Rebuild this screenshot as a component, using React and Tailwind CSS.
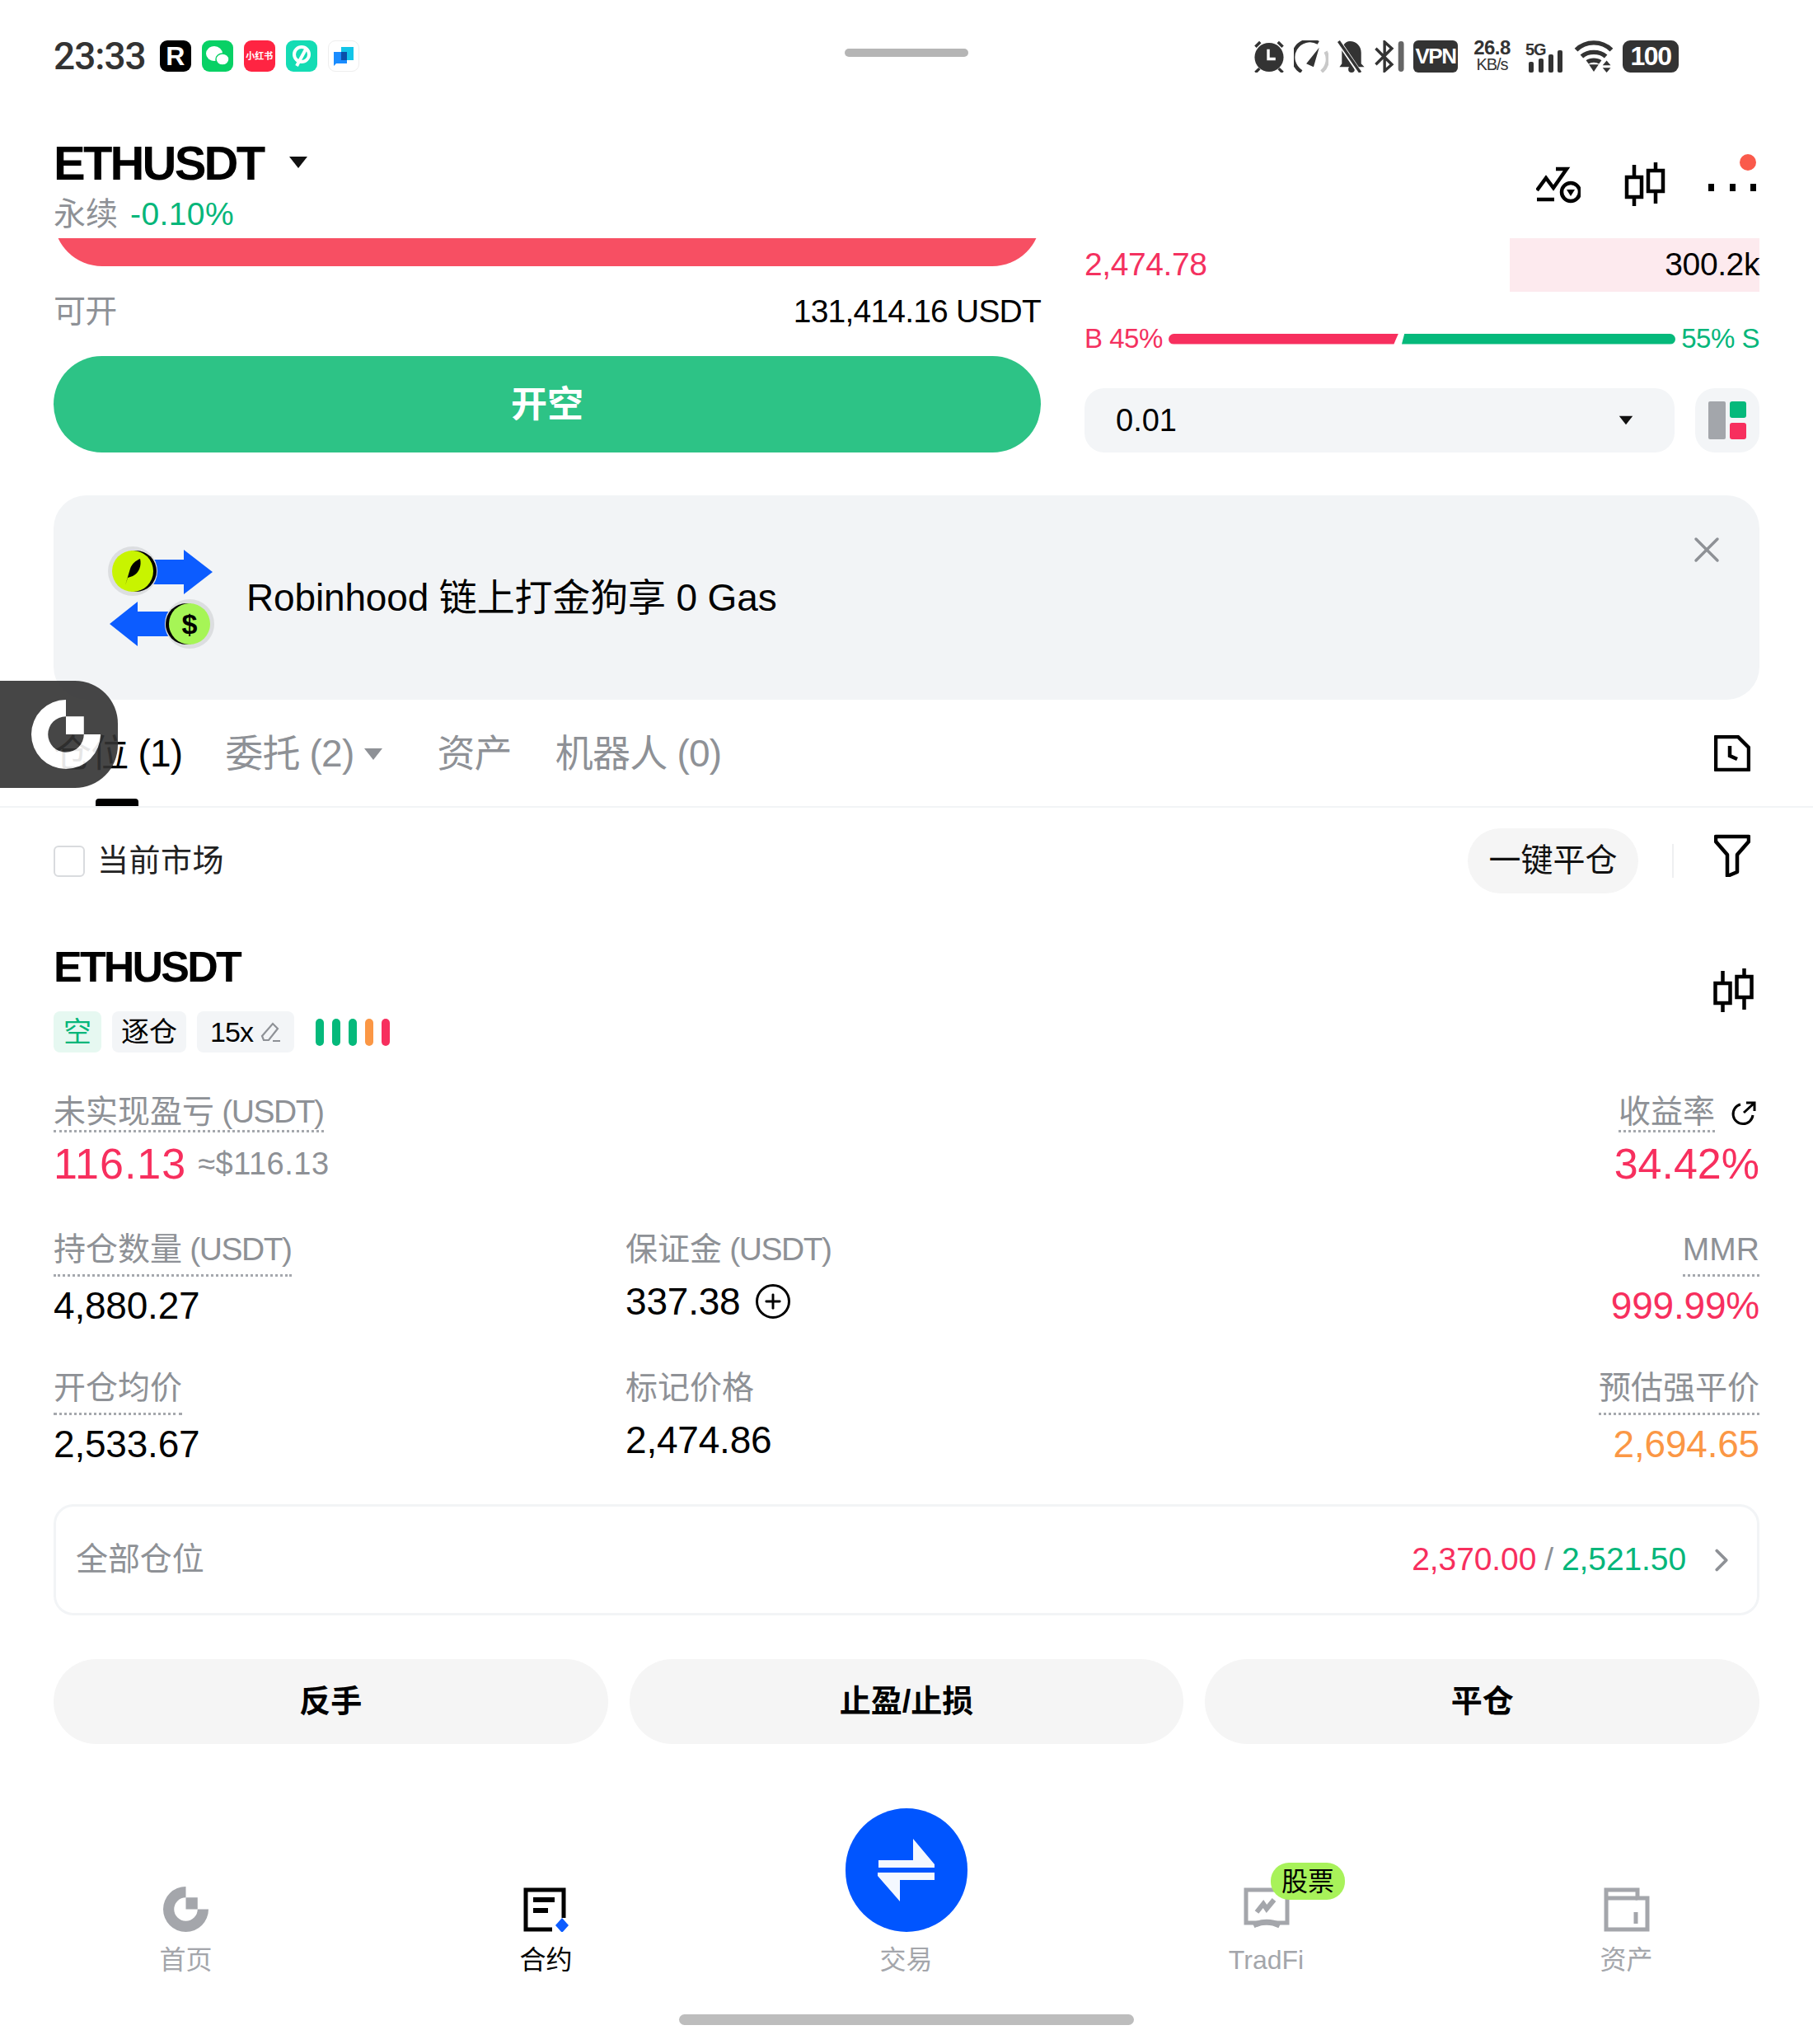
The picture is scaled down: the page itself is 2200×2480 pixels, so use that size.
import React from 'react';
import { X, ChevronRight, Plus } from 'lucide-react';

const FONT = { fontFamily: '"Liberation Sans", "Noto Sans CJK SC", sans-serif' };

function Caret({ className }) {
  return (
    <svg viewBox="0 0 24 16" className={className}>
      <path d="M1 1h22L12 15z" fill="currentColor" />
    </svg>
  );
}

function Candles({ className }) {
  return (
    <svg viewBox="0 0 50 54" className={className} fill="none" stroke="#000" strokeWidth="4.5">
      <path d="M12 3v15M12 41v12M38 0v10M38 36v14" />
      <rect x="3" y="18" width="18" height="24" />
      <rect x="29" y="10" width="18" height="25" />
    </svg>
  );
}

function GateLogo({ className, color }) {
  return (
    <svg viewBox="0 0 54 54" className={className} fill={color}>
      <path d="M27 0A27 27 0 1 0 54 27H41A14 14 0 1 1 27 13Z" />
      <rect x="27" y="13" width="14" height="14" />
    </svg>
  );
}

function AppIcons() {
  return (
    <div className="flex gap-[13px] ml-[17px]">
      <div className="w-[38px] h-[38px] rounded-[9px] bg-black flex items-center justify-center text-white text-[32px] font-bold">R</div>
      <div className="w-[38px] h-[38px] rounded-[9px] bg-[#08d165] flex items-center justify-center">
        <svg viewBox="0 0 30 28" className="w-[30px] h-[28px]" fill="#fff">
          <ellipse cx="11" cy="11" rx="10" ry="9" />
          <ellipse cx="21" cy="18" rx="8" ry="7" stroke="#08d165" strokeWidth="1.5" />
        </svg>
      </div>
      <div className="w-[38px] h-[38px] rounded-[9px] bg-[#ff2442] flex items-center justify-center text-white text-[11px] font-bold whitespace-nowrap">小红书</div>
      <div className="w-[38px] h-[38px] rounded-[9px] bg-[#14dcb4] flex items-center justify-center">
        <svg viewBox="0 0 28 28" className="w-[28px] h-[28px]" fill="none" stroke="#fff" strokeWidth="4">
          <circle cx="14" cy="12" r="9" />
          <path d="M8 26 20 4" />
        </svg>
      </div>
      <div className="w-[38px] h-[38px] rounded-[9px] bg-white border border-[#eeeeee] flex items-center justify-center">
        <svg viewBox="0 0 28 28" className="w-[28px] h-[28px]">
          <rect x="11" y="3" width="15" height="16" fill="#12c5e8" />
          <path d="M2 9h16v14H5l-3 3z" fill="#1a8cff" />
          <rect x="11" y="9" width="7" height="10" fill="#0a4fa8" />
        </svg>
      </div>
    </div>
  );
}

function StatusIcons() {
  return (
    <div className="flex items-center h-[39px] text-[#333333]">
      <svg viewBox="0 0 40 40" className="w-[40px] h-[39px]" fill="#333">
        <circle cx="20" cy="21" r="18" />
        <path d="M3 8l6-6M37 8l-6-6M8 35l-5 5M32 35l5 5" stroke="#333" strokeWidth="3.5" />
        <path d="M19 11v12h9" stroke="#fff" strokeWidth="3.5" fill="none" />
      </svg>
      <svg viewBox="0 0 42 40" className="w-[42px] h-[39px] ml-[10px]" fill="none" strokeWidth="4.5">
        <path d="M9 39A20 20 0 0 1 30 3" stroke="#333" />
        <path d="M34 39A20 20 0 0 0 39 14" stroke="#c9c9c9" />
        <path d="M15 29 31 9l-7 24z" fill="#333" stroke="none" />
      </svg>
      <svg viewBox="0 0 34 40" className="w-[34px] h-[39px] ml-[11px]" fill="#333">
        <path d="M15 1c8 0 14 6 14 14v14l4 4H2l3-4V13C5 7 9 1 15 1z" />
        <circle cx="17" cy="36" r="4" />
        <path d="M0 0l27 40" stroke="#fff" strokeWidth="6" />
        <path d="M1 1l27 39" stroke="#333" strokeWidth="3.5" />
      </svg>
      <svg viewBox="0 0 39 40" className="w-[39px] h-[39px] ml-[9px]" fill="none" stroke="#333" strokeWidth="3.5">
        <path d="M3 10l20 20-9 8V2l9 8L3 30" />
        <rect x="31" y="1" width="7" height="38" rx="3.5" fill="#666" stroke="none" />
      </svg>
      <div className="ml-[10px] w-[54px] h-[39px] rounded-[6px] bg-[#333333] flex items-center justify-center text-white text-[26px] font-semibold tracking-[-1.5px]">VPN</div>
      <div className="ml-[17px] w-[49px] flex flex-col items-center text-[24px] leading-[20px] font-bold tracking-[-0.5px] whitespace-nowrap">
        <span>26.8</span>
        <span className="text-[20px] tracking-[-1px] font-normal">KB/s</span>
      </div>
      <div className="ml-[16px] w-[47px] h-[39px] relative">
        <span className="absolute left-0 top-[-4px] text-[20px] font-bold tracking-[-1px]">5G</span>
        <svg viewBox="0 0 47 39" className="w-[47px] h-[39px]" fill="#333">
          <rect x="4" y="26" width="6" height="13" rx="2" />
          <rect x="16" y="22" width="6" height="17" rx="2" />
          <rect x="28" y="17" width="6" height="22" rx="2" />
          <rect x="39" y="12" width="6" height="27" rx="2" />
        </svg>
      </div>
      <svg viewBox="0 0 48 40" className="w-[48px] h-[39px] ml-[12px]" fill="none" stroke="#333" strokeWidth="5.5">
        <path d="M2 12C14 0 34 0 46 12M9 20c8-7 22-7 30 0M16 27c4-3 12-3 16 0" />
        <path d="M18 30h12l-6 9z" fill="#333" stroke="none" />
        <path d="M40 25l5 6H35zM40 40l5-6H35z" fill="#333" stroke="none" />
      </svg>
      <div className="ml-[11px] w-[68px] h-[39px] rounded-[9px] bg-[#333333] flex items-center justify-center text-white text-[32px] font-semibold tracking-[-1.5px]">100</div>
    </div>
  );
}

function Dotted({ children, pb = 'pb-[8px]' }) {
  return (
    <span className={`inline-block text-[39px] leading-[44px] ${pb} border-b-[3px] border-dotted border-[#a5a8ad] text-[#8e9196] whitespace-nowrap`}>
      {children}
    </span>
  );
}

function Usdt() {
  return <span className="tracking-[-1.5px]"> (USDT)</span>;
}

function Stat({ label, value, valueClass = '', right, dotted = true }) {
  return (
    <div className={right ? 'flex flex-col items-end' : 'flex flex-col items-start'}>
      {dotted ? <Dotted>{label}</Dotted> : <span className="text-[39px] leading-[44px] text-[#8e9196] whitespace-nowrap">{label}</span>}
      <div className={`${dotted ? 'mt-[8px]' : 'mt-[14px]'} flex items-center text-[46px] leading-[54px] tracking-[-0.2px] ${valueClass}`}>{value}</div>
    </div>
  );
}

function NavItem({ label, active, children }) {
  return (
    <div className="w-[437px] flex flex-col items-center">
      <div className="h-[150px] w-full flex items-end justify-center relative">{children}</div>
      <span className={`mt-[16px] text-[32px] leading-[36px] ${active ? 'text-black' : 'text-[#a4a6ab]'}`}>{label}</span>
    </div>
  );
}

export default function App() {
  return (
    <div style={FONT} className="relative w-[2200px] h-[2480px] overflow-hidden bg-white text-black">
      {/* status bar */}
      <div className="h-[136px] pl-[65px] pr-[163px] flex items-center justify-between relative">
        <div className="flex items-center">
          <span className="text-[46px] text-[#333333] tracking-[-1px] font-medium" style={{ fontFamily: 'Roboto, sans-serif' }}>23:33</span>
          <AppIcons />
        </div>
        <div className="absolute left-[1025px] top-[59px] w-[150px] h-[10px] rounded-full bg-[#b5b5b5]" />
        <StatusIcons />
      </div>

      {/* header */}
      <div className="h-[153px] pl-[65px] pr-[69px] flex justify-between relative">
        <div>
          <div className="flex items-center h-[46px] mt-[38px]">
            <span className="text-[58px] font-bold tracking-[-2.8px]">ETHUSDT</span>
            <Caret className="w-[24px] h-[16px] ml-[31px] text-[#111]" />
          </div>
          <div className="flex items-center h-[44px] mt-[18px] text-[39px] whitespace-nowrap">
            <span className="text-[#8e9196]">永续</span>
            <span className="ml-[15px] text-[#05b67a] tracking-[0.4px]">-0.10%</span>
          </div>
        </div>
        <div className="flex items-start pt-[65px]">
          <svg viewBox="0 0 54 46" className="w-[54px] h-[46px]" fill="none" stroke="#000" strokeWidth="4.5">
            <path d="M1 30 12 15l9 12L37 4H24M1 41h21" />
            <circle cx="42" cy="32" r="11" />
            <path d="M37 29h10l-5 8z" fill="#000" stroke="none" />
          </svg>
          <Candles className="w-[50px] h-[54px] ml-[53px] -mt-[4px]" />
          <div className="ml-[52px] mt-[22px] w-[58px] flex justify-between">
            <div className="w-[7px] h-[9px] bg-black" />
            <div className="w-[7px] h-[9px] bg-black" />
            <div className="w-[7px] h-[9px] bg-black" />
          </div>
        </div>
        <div className="absolute left-[2111px] top-[51px] w-[20px] h-[20px] rounded-full bg-[#fa5a4b]" />
      </div>

      {/* order area */}
      <div className="h-[260px] px-[65px] flex justify-between">
        <div className="w-[1198px]">
          <div className="h-[34px] overflow-hidden">
            <div className="h-[118px] -mt-[84px] rounded-full bg-[#f74f63]" />
          </div>
          <div className="h-[109px] pt-[2px] flex items-center justify-between text-[39px] tracking-[-0.8px]">
            <span className="text-[#8e9196]">可开</span>
            <span>131,414.16 USDT</span>
          </div>
          <div className="h-[117px] rounded-full bg-[#2dc386] flex items-center justify-center text-white text-[44px] font-bold">开空</div>
        </div>
        <div className="w-[819px]">
          <div className="h-[65px] flex items-center justify-between text-[39px] tracking-[-0.4px]">
            <span className="text-[#f4315f]">2,474.78</span>
            <div className="w-[303px] h-[65px] bg-[#fdeaee] flex items-center justify-end">300.2k</div>
          </div>
          <div className="h-[32px] mt-[41px] flex items-center justify-between text-[33px] tracking-[-0.5px] whitespace-nowrap">
            <span className="text-[#f4315f]">B 45%</span>
            <div className="w-[615px] h-[13px] flex gap-[4px]">
              <div className="w-[279px] rounded-l-full bg-[#f72f5e] [clip-path:polygon(0_0,100%_0,98%_100%,0_100%)]" />
              <div className="flex-1 rounded-r-full bg-[#05b97b] [clip-path:polygon(1%_0,100%_0,100%_100%,0_100%)]" />
            </div>
            <span className="text-[#05b67a]">55% S</span>
          </div>
          <div className="mt-[44px] flex justify-between">
            <div className="w-[716px] h-[78px] rounded-[24px] bg-[#f3f5f7] pl-[38px] pr-[50px] flex items-center justify-between text-[38px]">
              <span>0.01</span>
              <Caret className="w-[18px] h-[12px] text-[#111]" />
            </div>
            <div className="w-[78px] h-[78px] rounded-[24px] bg-[#f3f5f7] flex items-center justify-center">
              <svg viewBox="0 0 46 46" className="w-[46px] h-[46px]">
                <rect width="21" height="46" rx="2" fill="#a3a6ab" />
                <rect x="26" width="20" height="20" rx="3" fill="#05b97b" />
                <rect x="26" y="26" width="20" height="20" rx="3" fill="#f72f5e" />
              </svg>
            </div>
          </div>
        </div>
      </div>

      {/* banner */}
      <div className="mx-[65px] mt-[52px] h-[248px] rounded-[40px] bg-[#f2f4f6] relative flex items-center pl-[65px]">
        <svg viewBox="0 0 130 130" className="w-[130px] h-[130px]">
          <path d="M55 19h38V7l35 27-35 27V49H55z" fill="#0c5cff" />
          <path d="M75 82H37V70L3 97l34 27v-12h38z" fill="#0c5cff" />
          <circle cx="31" cy="33" r="30" fill="#dcdee0" />
          <circle cx="35" cy="33" r="25" fill="#000" />
          <circle cx="31" cy="33" r="25" fill="#c8f400" />
          <path d="M22 50 28 30c2-6 7-10 12-12 2 8-1 17-9 21l-6 2z" fill="#000" />
          <circle cx="100" cy="97" r="30" fill="#dcdee0" />
          <circle cx="96" cy="97" r="25" fill="#000" />
          <circle cx="100" cy="97" r="25" fill="#a6f556" />
          <text x="100" y="109" textAnchor="middle" fontSize="34" fontWeight="700" fill="#000">$</text>
        </svg>
        <span className="ml-[39px] text-[46px] tracking-[-0.15px] whitespace-nowrap">Robinhood 链上打金狗享 0 Gas</span>
        <X className="absolute right-[38px] top-[40px] w-[52px] h-[52px] text-[#8e9196]" strokeWidth={1.6} />
      </div>

      {/* tabs */}
      <div className="h-[131px] border-b-[2px] border-[#f2f4f6] pl-[65px] pr-[76px] flex items-center justify-between relative">
        <div className="flex items-center text-[46px] pt-[2px] tracking-[-0.8px] whitespace-nowrap text-[#8e9196]">
          <span className="text-black">仓位 (1)</span>
          <span className="ml-[52px]">委托 (2)</span>
          <Caret className="ml-[12px] w-[24px] h-[16px] text-[#8e9196]" />
          <span className="ml-[65px]">资产</span>
          <span className="ml-[53px]">机器人 (0)</span>
        </div>
        <svg viewBox="0 0 44 44" className="w-[44px] h-[44px]" fill="none" stroke="#000" strokeWidth="4.5">
          <path d="M2 2h27l13 13v27H2z" strokeLinejoin="round" />
          <path d="M19 13v12l9 4" />
        </svg>
        <div className="absolute left-[116px] bottom-0 w-[52px] h-[9px] rounded-t-[4px] bg-black" />
      </div>

      {/* filter row */}
      <div className="h-[145px] pl-[65px] pr-[76px] flex items-center justify-between pb-[16px]">
        <div className="flex items-center gap-[15px] text-[38px] text-[#222]">
          <div className="w-[38px] h-[38px] rounded-[6px] border-[2px] border-[#d9dbde]" />
          <span className="tracking-[0.5px]">当前市场</span>
        </div>
        <div className="flex items-center">
          <div className="w-[207px] h-[79px] rounded-full bg-[#f5f5f5] flex items-center justify-center text-[39px] text-[#111]">一键平仓</div>
          <div className="w-[2px] h-[41px] bg-[#eeeff1] ml-[41px] mr-[49px]" />
          <svg viewBox="0 0 44 52" className="w-[44px] h-[52px] -mt-[13px]" fill="none" stroke="#000" strokeWidth="4.5" strokeLinejoin="round">
            <path d="M2 3h40v6L28 25v21l-12 5V25L2 9z" />
          </svg>
        </div>
      </div>

      {/* position */}
      <div className="px-[65px]">
        <div className="flex items-start justify-between h-[102px]">
          <span className="mt-[20px] text-[52px] leading-[56px] font-bold tracking-[-2.8px]">ETHUSDT</span>
          <Candles className="w-[51px] h-[54px] mt-[50px] mr-[6px]" />
        </div>
        <div className="flex items-center h-[50px] text-[34px]">
          <div className="w-[58px] h-[50px] rounded-[8px] bg-[#e6f8f1] text-[#05b67a] flex items-center justify-center">空</div>
          <div className="ml-[13px] w-[90px] h-[50px] rounded-[8px] bg-[#f3f5f7] flex items-center justify-center">逐仓</div>
          <div className="ml-[13px] w-[118px] h-[50px] rounded-[8px] bg-[#f3f5f7] flex items-center justify-center gap-[8px] tracking-[-1px]">
            15x
            <svg viewBox="0 0 26 26" className="w-[26px] h-[26px]" fill="none" stroke="#8e9196" strokeWidth="2.2">
              <path d="M3 18 16 3l6 6L11 23H5zM16 24h9" />
            </svg>
          </div>
          <div className="ml-[26px] flex gap-[10px]">
            <div className="w-[10px] h-[33px] rounded-full bg-[#05b97b]" />
            <div className="w-[10px] h-[33px] rounded-full bg-[#05b97b]" />
            <div className="w-[10px] h-[33px] rounded-full bg-[#05b97b]" />
            <div className="w-[10px] h-[33px] rounded-full bg-[#fb9745]" />
            <div className="w-[10px] h-[33px] rounded-full bg-[#f72f5e]" />
          </div>
        </div>

        <div className="mt-[50px] flex justify-between h-[128px]">
          <div>
            <Dotted pb="pb-0">未实现盈亏<Usdt /></Dotted>
            <div className="mt-[8px] flex items-center whitespace-nowrap">
              <span className="text-[52px] leading-[60px] tracking-[1px] text-[#f72f5e]">116.13</span>
              <span className="ml-[14px] text-[38px] tracking-[0.5px] text-[#8e9196]">≈$116.13</span>
            </div>
          </div>
          <div className="flex flex-col items-end">
            <div className="flex items-start mr-[4px]">
              <Dotted pb="pb-0">收益率</Dotted>
              <svg viewBox="0 0 32 30" className="w-[32px] h-[30px] ml-[18px] mt-[9px]" fill="none" stroke="#000" strokeWidth="3">
                <path d="M13 4a12 12 0 1 0 15 13M17 14 29 3M20 2h10v10" />
              </svg>
            </div>
            <span className="mt-[8px] text-[52px] leading-[60px] text-[#f72f5e]">34.42%</span>
          </div>
        </div>

        <div className="mt-[39px] grid grid-cols-[694px_1fr_auto] gap-y-[51px]">
          <Stat label={<>持仓数量<Usdt /></>} value="4,880.27" />
          <Stat
            label={<>保证金<Usdt /></>}
            dotted={false}
            value={
              <>
                337.38
                <span className="ml-[18px] w-[42px] h-[42px] rounded-full border-[3px] border-black flex items-center justify-center">
                  <Plus className="w-[28px] h-[28px]" strokeWidth={2.5} />
                </span>
              </>
            }
          />
          <Stat label="MMR" value="999.99%" valueClass="text-[#f72f5e]" right />
          <Stat label="开仓均价" value="2,533.67" />
          <Stat label="标记价格" value="2,474.86" dotted={false} />
          <Stat label="预估强平价" value="2,694.65" valueClass="text-[#fb9745]" right />
        </div>

        <div className="mt-[46px] h-[135px] rounded-[24px] border-[3px] border-[#f2f4f6] pl-[24px] pr-[20px] flex items-center justify-between text-[39px] tracking-[-0.1px]">
          <span className="text-[#8e9196]">全部仓位</span>
          <div className="flex items-center">
            <span className="text-[#f72f5e]">2,370.00</span>
            <span className="text-[#8e9196] mx-[10px]">/</span>
            <span className="text-[#05b67a]">2,521.50</span>
            <ChevronRight className="ml-[20px] w-[46px] h-[46px] text-[#8e9196]" strokeWidth={2} />
          </div>
        </div>

        <div className="mt-[53px] grid grid-cols-3 gap-[26px]">
          <div className="h-[103px] rounded-full bg-[#f5f5f5] flex items-center justify-center text-[38px] font-bold">反手</div>
          <div className="h-[103px] rounded-full bg-[#f5f5f5] flex items-center justify-center text-[38px] font-bold">止盈/止损</div>
          <div className="h-[103px] rounded-full bg-[#f5f5f5] flex items-center justify-center text-[38px] font-bold">平仓</div>
        </div>
      </div>

      {/* bottom nav */}
      <div className="mt-[78px] pl-[7px] flex">
        <NavItem label="首页">
          <GateLogo className="w-[55px] h-[55px]" color="#a4a6ab" />
        </NavItem>
        <NavItem label="合约" active>
          <svg viewBox="0 0 56 54" className="w-[56px] h-[54px]" fill="none">
            <path d="M35 51H3V3h46v34" stroke="#000" strokeWidth="5" />
            <path d="M12 15h26M12 28h18" stroke="#000" strokeWidth="6" />
            <path d="M47 37l8 9-8 9-8-9z" fill="#0c5cff" />
          </svg>
        </NavItem>
        <NavItem label="交易">
          <div className="w-[148px] h-[150px] rounded-full bg-[#0055ff] flex items-center justify-center">
            <svg viewBox="0 0 72 76" className="w-[72px] h-[76px]" fill="#f4f8ff">
              <path d="M2 26h42V0l26 31v4H2z" />
              <path d="M70 50H28v26L1 45v-4h69z" />
            </svg>
          </div>
        </NavItem>
        <NavItem label="TradFi">
          <svg viewBox="0 0 56 54" className="w-[56px] h-[54px]" fill="none" stroke="#a4a6ab" strokeWidth="5">
            <path d="M3 3h50v40H3z" />
            <path d="M12 46c10-5 22-5 32 0" strokeWidth="7" />
            <path d="M16 30l8-10 4 6 9-11" strokeWidth="6" />
          </svg>
          <div className="absolute left-[224px] top-[66px] w-[90px] h-[45px] rounded-[22px] bg-[#a8f25a] flex items-center justify-center text-[32px] text-black">股票</div>
        </NavItem>
        <NavItem label="资产">
          <svg viewBox="0 0 56 54" className="w-[56px] h-[54px]" fill="none" stroke="#a4a6ab" strokeWidth="5">
            <path d="M3 51V3h38v10h12v38z" />
            <path d="M3 13h38M39 30v14" />
          </svg>
        </NavItem>
      </div>

      <div className="absolute left-[824px] top-[2444px] w-[552px] h-[13px] rounded-full bg-[#bdbdbd]" />

      {/* floating button, the tab label shows faintly through it */}
      <div className="absolute left-0 top-[826px] w-[143px] h-[130px] rounded-r-[52px] bg-[#333333] opacity-90 flex items-center pl-[38px]">
        <GateLogo className="w-[84px] h-[84px]" color="#fff" />
      </div>
    </div>
  );
}
